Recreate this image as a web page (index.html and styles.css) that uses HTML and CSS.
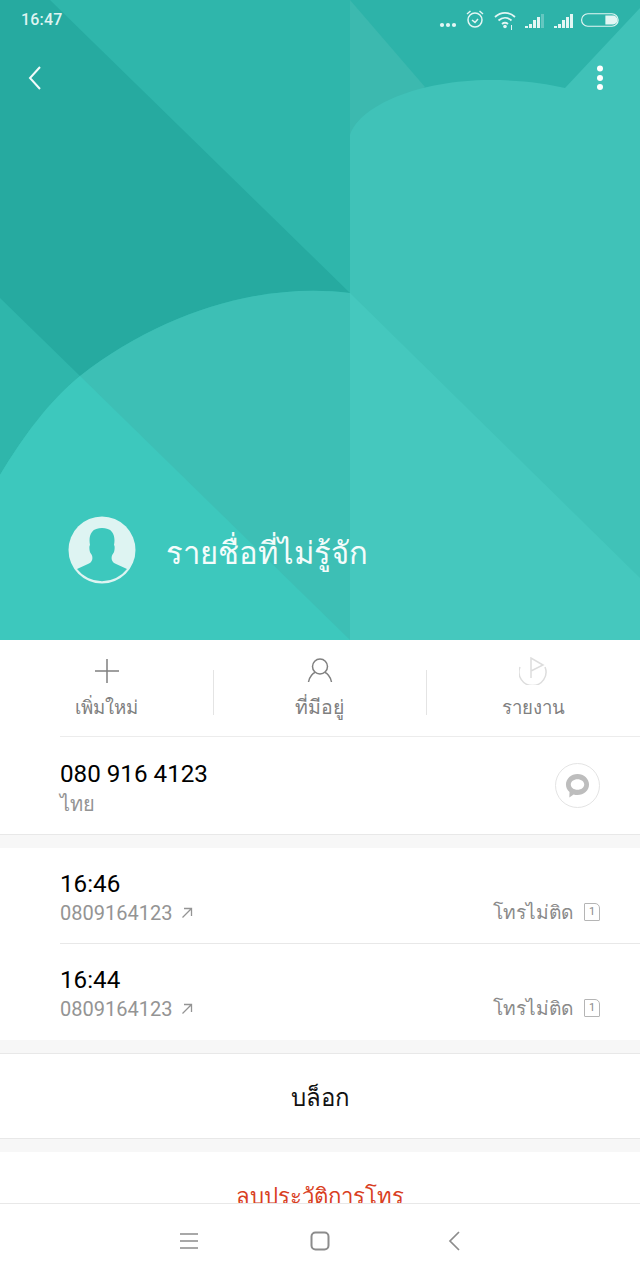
FILE: index.html
```html
<!DOCTYPE html>
<html lang="th">
<head>
<meta charset="utf-8">
<title>รายชื่อที่ไม่รู้จัก</title>
<link rel="stylesheet" href="styles.css">
</head>
<body>
<div class="screen">
  <main class="main">
    <header class="hero">
      <svg class="hero-bg" viewBox="0 0 640 640" aria-hidden="true">
        <rect width="350" height="640" fill="#2fb6ab"/>
        <path d="M0 0H50L350 293C265 282 165 310 80 376L0 298Z" fill="#26aaa0"/>
        <path d="M0 475C22 438 50 400 80 376C165 310 265 282 350 293V640H0Z" fill="#3dbfb5"/>
        <path d="M0 475C22 438 50 400 80 376L350 640H0Z" fill="#3dc8bd"/>
        <rect x="350" width="290" height="640" fill="#2db3a9"/>
        <path d="M350 0L425 87L350 135Z" fill="#3cb9af"/>
        <path d="M350 135C360 105 420 80 490 80C520 80 545 83 565 88L640 8V640H350Z" fill="#40c2b8"/>
        <path d="M350 293L640 578V640H350Z" fill="#45c8be"/>
      </svg>
      <div class="status">
        <span class="clock">16:47</span>
        <div class="status-icons">
          <svg class="i-dots" viewBox="0 0 18 6"><circle cx="3" cy="3" r="2.1"/><circle cx="9" cy="3" r="2.1"/><circle cx="15" cy="3" r="2.1"/></svg>
          <svg class="i-alarm" viewBox="0 0 20 20"><circle cx="10" cy="11" r="7" class="ln"/><path d="M7 11l3 2.4 3-3.4M2 5l3.500-3M18 5l-3.500-3" class="ln"/></svg>
          <svg class="i-wifi" viewBox="0 0 22 20"><path d="M1 7c6-5.500 14-5.500 20 0M4.500 10.500c4-3.500 9-3.500 13 0M8 14c1.800-1.500 4.200-1.500 6 0" class="ln w2"/><circle cx="11" cy="16.500" r="1.800"/><path d="M17 15h1v5h-1z"/></svg>
          <svg class="i-sig" viewBox="0 0 20 14"><path d="M0 12h3v2H0zM4 10h3v4H4zM8 6h3v8H8zM12 3h3v11h-3z"/><path d="M16 0h3v14h-3z" opacity=".3"/></svg>
          <svg class="i-sig" viewBox="0 0 20 14"><path d="M0 12h3v2H0zM4 10h3v4H4zM8 6h3v8H8zM12 3h3v11h-3zM16 0h3v14h-3z"/></svg>
          <svg class="i-batt" viewBox="0 0 40 14"><rect x=".6" y=".6" width="37.500" height="12.800" rx="6.400" class="ln thin"/><path d="M25 2.500h8a4.500 4.500 0 0 1 0 9h-8z"/></svg>
        </div>
      </div>
      <div class="toolbar">
        <svg class="i-back" viewBox="0 0 16 26"><path d="M13 2L3 13l10 11"/></svg>
        <svg class="i-more" viewBox="0 0 8 26"><circle cx="4" cy="3.500" r="3"/><circle cx="4" cy="13" r="3"/><circle cx="4" cy="22" r="3"/></svg>
      </div>
      <div class="identity">
        <svg class="avatar" viewBox="0 0 68 68">
          <circle cx="34" cy="34" r="33.500" fill="#def4f2"/>
          <path d="M9 53L21 47.500C25 45.500 25 41 23.500 38.500C22 37 21 34 21.500 30L22 29C21 24 21.500 19 24 16C26 13 30 12 34 12C38 12 42 13 44 16C46.500 19 47 24 46 29L46.500 30C47 34 46 37 44.500 38.500C43 41 43 45.500 47 47.500L59 53A31.500 31.500 0 0 1 9 53Z" fill="#3dc8bd"/>
        </svg>
        <h1 class="name">รายชื่อที่ไม่รู้จัก</h1>
      </div>
    </header>

    <section class="actions">
      <div class="action">
        <svg class="a-icon" viewBox="0 0 28 28"><path d="M14 2v24M2 14h24"/></svg>
        <span>เพิ่มใหม่</span>
      </div>
      <div class="action">
        <svg class="a-icon" viewBox="0 0 28 28"><circle cx="14" cy="9.500" r="7.500"/><path d="M2.500 25c1-6 5-9 6.500-9.500M25.500 25c-1-6-5-9-6.500-9.500"/></svg>
        <span class="wide">ที่มีอยู่</span>
      </div>
      <div class="action">
        <svg class="a-icon faint" viewBox="0 0 28 28"><path d="M1 10A13.500 13.500 0 1 0 26 10M12 21V1l12 7-12 6"/></svg>
        <span>รายงาน</span>
      </div>
    </section>

    <section class="card number-row">
      <div>
        <div class="primary">080 916 4123</div>
        <div class="secondary">ไทย</div>
      </div>
      <div class="msg-btn">
        <svg class="i-msg" viewBox="0 0 26 26"><path fill-rule="evenodd" d="M13 1c6.600 0 12 4.900 12 11 0 6.100-5.400 11-12 11-1.500 0-2.800-.2-4-.6L4.500 25.500l.2-5.700C2.400 17.800 1 15.100 1 12 1 5.900 6.400 1 13 1zm0 5.500c-3.900 0-7 2.500-7 5.500s3.100 5.500 7 5.500 7-2.500 7-5.500-3.100-5.500-7-5.500z"/></svg>
      </div>
    </section>

    <section class="card calls">
      <div class="call">
        <div>
          <div class="primary">16:46</div>
          <div class="secondary num">0809164123 <svg class="i-out" viewBox="0 0 12 12"><path d="M1.500 10.500L10.500 1.500M3 1.500h7.500V9"/></svg></div>
        </div>
        <div class="result"><span>โทรไม่ติด</span><span class="sim">1</span></div>
      </div>
      <div class="call">
        <div>
          <div class="primary">16:44</div>
          <div class="secondary num">0809164123 <svg class="i-out" viewBox="0 0 12 12"><path d="M1.500 10.500L10.500 1.500M3 1.500h7.500V9"/></svg></div>
        </div>
        <div class="result"><span>โทรไม่ติด</span><span class="sim">1</span></div>
      </div>
    </section>

    <section class="card block-row">บล็อก</section>
    <section class="delete-row">ลบประวัติการโทร</section>
  </main>

  <nav class="navbar">
    <svg class="n-menu" viewBox="0 0 20 18"><path d="M1 2h18M1 9h18M1 16h18"/></svg>
    <svg class="n-home" viewBox="0 0 20 20"><rect x="1.500" y="1.500" width="17" height="17" rx="4"/></svg>
    <svg class="n-back" viewBox="0 0 12 20"><path d="M11 1L2 10l9 9"/></svg>
  </nav>
</div>
</body>
</html>
```
FILE: styles.css
```css
* { box-sizing: border-box; }
html, body { margin: 0; padding: 0; }
body {
  width: 640px;
  height: 1280px;
  overflow: hidden;
  background: #f7f7f7;
  font-family: "Noto Sans", Roboto, "Liberation Sans", "DejaVu Sans", sans-serif;
}
.screen { width: 640px; height: 1280px; display: flex; flex-direction: column; }
.main { flex: 1; overflow: hidden; min-height: 0; }

.hero {
  position: relative;
  height: 640px;
  display: flex;
  flex-direction: column;
  color: #fff;
}
.hero-bg { position: absolute; left: 0; top: 0; width: 640px; height: 640px; }
.status, .toolbar, .identity { position: relative; }

.status {
  height: 40px;
  padding: 10px 20px 0 21px;
  display: flex;
  justify-content: space-between;
  align-items: flex-start;
}
.clock { font: 500 16px/20px Roboto, sans-serif; color: #dff4f1; letter-spacing: .2px; }
.status-icons { display: flex; align-items: center; height: 20px; fill: #e3f6f4; }
.status-icons svg { display: block; }
.ln { fill: none; stroke: #e3f6f4; stroke-width: 1.500; }
.ln.w2 { stroke-width: 1.800; }
.ln.thin { stroke-width: 1.200; }
.i-dots { width: 18px; height: 6px; margin-top: 9px; margin-right: 8px; }
.i-alarm { width: 20px; height: 20px; margin-top: -3px; margin-right: 9px; }
.i-wifi { width: 22px; height: 20px; margin-top: -1px; margin-right: 9px; }
.i-sig { width: 20px; height: 14px; margin-right: 9px; margin-top: 1px; }
.i-sig + .i-sig { margin-right: 7px; }
.i-batt { width: 39px; height: 14px; margin-top: -1px; }

.toolbar {
  height: 50px;
  margin-top: 13px;
  padding: 0 36px 0 27px;
  display: flex;
  justify-content: space-between;
  align-items: center;
}
.i-back { width: 16px; height: 26px; fill: none; stroke: #f2fbfa; stroke-width: 2; }
.i-more { width: 8px; height: 26px; fill: #fff; }

.identity {
  margin-top: auto;
  margin-bottom: 56px;
  padding-left: 68px;
  display: flex;
  align-items: center;
  gap: 30px;
}
.avatar { width: 68px; height: 68px; display: block; }
.name {
  margin: 0;
  font-size: 31px;
  font-weight: 400;
  line-height: 44px;
  color: #f4fcfb;
  position: relative;
  top: 2px;
}

.actions {
  height: 97px;
  display: grid;
  grid-template-columns: 213px 213px 214px;
  background: #fff linear-gradient(#ececec, #ececec) 60px 96px / 580px 1px no-repeat;
}
.action {
  display: flex;
  flex-direction: column;
  align-items: center;
  padding-top: 17px;
  font-size: 18.600px;
  line-height: 32px;
  color: #808080;
}
.action span { position: relative; top: 4px; }
.action .wide { font-size: 19.500px; }
.action + .action { background: linear-gradient(#e4e4e4, #e4e4e4) 0 30px / 1px 45px no-repeat; }
.a-icon { width: 28px; height: 28px; fill: none; stroke: #808080; stroke-width: 1.500; margin-bottom: 2px; }
.a-icon.faint { stroke: #dddddd; }

.card { background: #fff; }
.primary { font: 400 24.200px/30px Roboto, sans-serif; color: #000; }
.secondary { font-size: 20px; line-height: 26px; color: #949494; margin-top: 2px; }
.num { font-family: Roboto, sans-serif; display: flex; align-items: center; gap: 9px; margin-top: 1px; }

.number-row {
  height: 98px;
  padding: 22px 40px 0 60px;
  display: flex;
  justify-content: space-between;
  align-items: flex-start;
  border-bottom: 1px solid #e8e8e8;
}
.msg-btn {
  width: 45px;
  height: 45px;
  margin-top: 4px;
  border: 1px solid #e4e4e4;
  border-radius: 50%;
  display: flex;
  align-items: center;
  justify-content: center;
}
.i-msg { width: 25px; height: 25px; fill: #bdbdbd; }
.i-out { width: 12px; height: 12px; fill: none; stroke: #949494; stroke-width: 1.300; }

.calls { margin-top: 13px; margin-bottom: 13px; padding-left: 60px; }
.call {
  height: 95px;
  padding: 21px 40px 0 0;
  display: flex;
  justify-content: space-between;
  align-items: flex-start;
}
.call + .call { border-top: 1px solid #e8e8e8; height: 97px; }
.result {
  display: flex;
  align-items: center;
  gap: 11px;
  margin-top: 29px;
  font-size: 19.200px;
  line-height: 28px;
  color: #8a8a8a;
}
.sim {
  width: 16px;
  height: 18px;
  border: 1px solid #b5b5b5;
  border-radius: 1px 5px 1px 1px;
  font: 400 11px/16px Roboto, sans-serif;
  text-align: center;
  color: #8a8a8a;
}

.block-row {
  height: 86px;
  padding-top: 2px;
  border-top: 1px solid #e8e8e8;
  border-bottom: 1px solid #e8e8e8;
  display: flex;
  align-items: center;
  justify-content: center;
  font-size: 24px;
  color: #111;
}
.delete-row {
  margin-top: 13px;
  height: 51px;
  background: #fff;
  padding-top: 26px;
  text-align: center;
  font-size: 22.200px;
  line-height: 36px;
  color: #d9401f;
}

.navbar {
  height: 77px;
  flex: none;
  background: #fff;
  border-top: 1px solid #e8e8e8;
  padding: 0 178px 2px 179px;
  display: flex;
  justify-content: space-between;
  align-items: center;
}
.navbar svg { fill: none; stroke: #8c8c8c; display: block; }
.n-menu { width: 20px; height: 18px; stroke-width: 1.500; }
.n-home { width: 20px; height: 20px; stroke-width: 2; position: relative; left: -5px; }
.n-back { width: 12px; height: 20px; stroke-width: 1.700; position: relative; left: -2px; }
```
